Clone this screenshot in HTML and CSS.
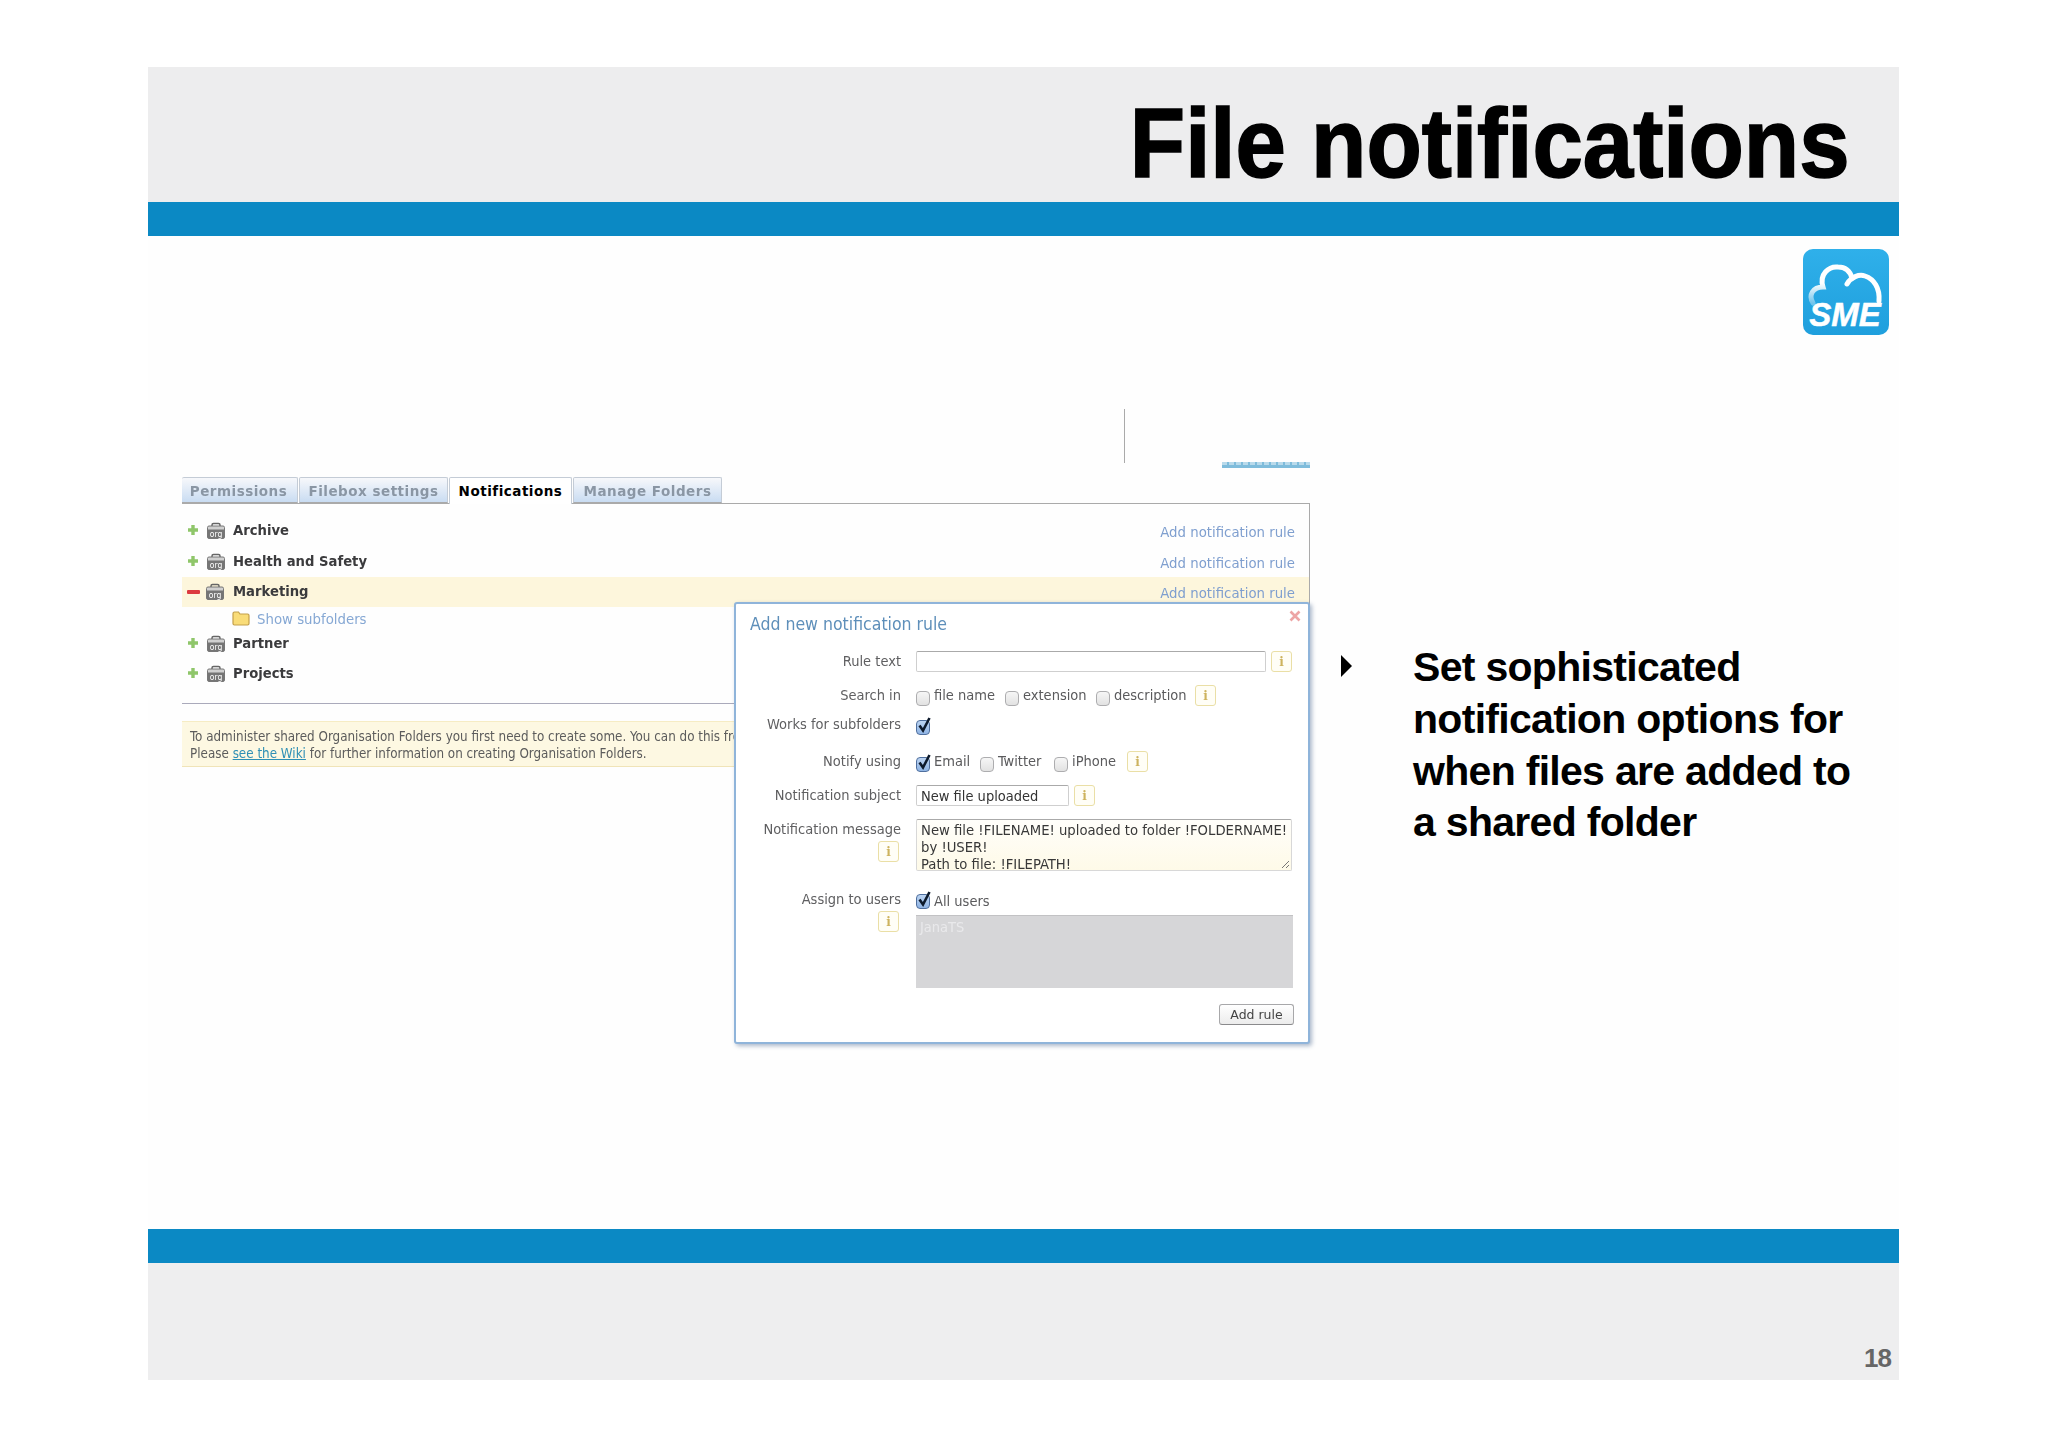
FILE: index.html
```html
<!DOCTYPE html>
<html lang="en">
<head>
<meta charset="utf-8">
<title>File notifications</title>
<link rel="stylesheet" href="styles.css">
</head>
<body>
<svg class="defs" width="0" height="0" aria-hidden="true">
  <symbol id="plus" viewBox="0 0 12 12">
    <path d="M4.300 1h3.400v3.300H11v3.400H7.700V11H4.300V7.700H1V4.300h3.300z" fill="#8fc66a"/>
  </symbol>
  <symbol id="tick" viewBox="0 0 16 18">
    <path d="M3.500 9.500l3.500 5L13.500 2" fill="none" stroke="#0d1a2c" stroke-width="2.600"/>
  </symbol>
</svg>

<div class="slide">
  <header class="head"><h1 class="title">File notifications</h1></header>
  <div class="bar"></div>

  <main class="main">
    <section class="app">
      <div class="topbits">
        <span class="vline"></span>
        <span class="strip"></span>
      </div>

      <nav class="tabs">
        <a class="tab tab-perm">Permissions</a>
        <a class="tab tab-file">Filebox settings</a>
        <a class="tab tab-on">Notifications</a>
        <a class="tab tab-man">Manage Folders</a>
      </nav>

      <div class="panel">
        <div class="row">
          <svg class="tog"><use href="#plus"/></svg>
          <svg class="org" viewBox="0 0 18 17"><path d="M5 5V3a1.500 1.500 0 0 1 1.500-1.500h5A1.500 1.500 0 0 1 13 3v2" fill="none" stroke="#666" stroke-width="1.500"/><rect x=".5" y="4" width="17" height="12.500" rx="1.500" fill="#d0d0d0" stroke="#777"/><rect x="1" y="7.500" width="16" height="8.500" fill="#757575"/><text x="9" y="14.500" text-anchor="middle" font-family="DejaVu Sans" font-size="8.500" fill="#fff">org</text></svg>
          <span class="name">Archive</span>
          <a class="addlink">Add notification rule</a>
        </div>
        <div class="row row-next">
          <svg class="tog"><use href="#plus"/></svg>
          <svg class="org" viewBox="0 0 18 17"><path d="M5 5V3a1.500 1.500 0 0 1 1.500-1.500h5A1.500 1.500 0 0 1 13 3v2" fill="none" stroke="#666" stroke-width="1.500"/><rect x=".5" y="4" width="17" height="12.500" rx="1.500" fill="#d0d0d0" stroke="#777"/><rect x="1" y="7.500" width="16" height="8.500" fill="#757575"/><text x="9" y="14.500" text-anchor="middle" font-family="DejaVu Sans" font-size="8.500" fill="#fff">org</text></svg>
          <span class="name">Health and Safety</span>
          <a class="addlink">Add notification rule</a>
        </div>
        <div class="row row-open">
          <span class="minus"></span>
          <svg class="org org-open" viewBox="0 0 18 17"><path d="M5 5V3a1.500 1.500 0 0 1 1.500-1.500h5A1.500 1.500 0 0 1 13 3v2" fill="none" stroke="#666" stroke-width="1.500"/><rect x=".5" y="4" width="17" height="12.500" rx="1.500" fill="#d0d0d0" stroke="#777"/><rect x="1" y="7.500" width="16" height="8.500" fill="#757575"/><text x="9" y="14.500" text-anchor="middle" font-family="DejaVu Sans" font-size="8.500" fill="#fff">org</text></svg>
          <span class="name">Marketing</span>
          <a class="addlink">Add notification rule</a>
        </div>
        <div class="subrow">
          <svg class="folder" viewBox="0 0 18 16"><path d="M1 3.500A1.500 1.500 0 0 1 2.500 2h4L8 4h7.500A1.500 1.500 0 0 1 17 5.500V13.500A1.500 1.500 0 0 1 15.500 15h-13A1.500 1.500 0 0 1 1 13.500z" fill="#f9dc78" stroke="#c39f4a" stroke-width="1.200"/></svg>
          <a class="sublink">Show subfolders</a>
        </div>
        <div class="row">
          <svg class="tog"><use href="#plus"/></svg>
          <svg class="org" viewBox="0 0 18 17"><path d="M5 5V3a1.500 1.500 0 0 1 1.500-1.500h5A1.500 1.500 0 0 1 13 3v2" fill="none" stroke="#666" stroke-width="1.500"/><rect x=".5" y="4" width="17" height="12.500" rx="1.500" fill="#d0d0d0" stroke="#777"/><rect x="1" y="7.500" width="16" height="8.500" fill="#757575"/><text x="9" y="14.500" text-anchor="middle" font-family="DejaVu Sans" font-size="8.500" fill="#fff">org</text></svg>
          <span class="name">Partner</span>
        </div>
        <div class="row">
          <svg class="tog"><use href="#plus"/></svg>
          <svg class="org" viewBox="0 0 18 17"><path d="M5 5V3a1.500 1.500 0 0 1 1.500-1.500h5A1.500 1.500 0 0 1 13 3v2" fill="none" stroke="#666" stroke-width="1.500"/><rect x=".5" y="4" width="17" height="12.500" rx="1.500" fill="#d0d0d0" stroke="#777"/><rect x="1" y="7.500" width="16" height="8.500" fill="#757575"/><text x="9" y="14.500" text-anchor="middle" font-family="DejaVu Sans" font-size="8.500" fill="#fff">org</text></svg>
          <span class="name">Projects</span>
        </div>
      </div>

      <div class="notice">
        <p class="notice-line">To administer shared Organisation Folders you first need to create some. You can do this from</p>
        <p class="notice-line">Please <a class="wiki">see the Wiki</a> for further information on creating Organisation Folders.</p>
      </div>

      <div class="modal">
        <div class="modal-head">
          <h2 class="modal-title">Add new notification rule</h2>
          <svg class="close" viewBox="0 0 12 12"><path d="M1.500 1.500l9 9M10.500 1.500l-9 9" stroke="#eda5a5" stroke-width="2.600" fill="none"/></svg>
        </div>

        <div class="frow frow-rule">
          <label class="flabel">Rule text</label>
          <div class="field"><span class="input input-wide"></span><span class="info">i</span></div>
        </div>

        <div class="frow frow-search">
          <label class="flabel">Search in</label>
          <div class="field">
            <span class="cb"></span><span class="opt opt-fn">file name</span>
            <span class="cb"></span><span class="opt opt-ext">extension</span>
            <span class="cb"></span><span class="opt opt-desc">description</span>
            <span class="info">i</span>
          </div>
        </div>

        <div class="frow frow-works">
          <label class="flabel">Works for subfolders</label>
          <div class="field"><span class="cb cb-on cb-works"><svg class="tick"><use href="#tick"/></svg></span></div>
        </div>

        <div class="frow frow-notify">
          <label class="flabel">Notify using</label>
          <div class="field">
            <span class="cb cb-on"><svg class="tick"><use href="#tick"/></svg></span><span class="opt opt-mail">Email</span>
            <span class="cb"></span><span class="opt opt-tw">Twitter</span>
            <span class="cb"></span><span class="opt opt-ip">iPhone</span>
            <span class="info">i</span>
          </div>
        </div>

        <div class="frow frow-subject">
          <label class="flabel">Notification subject</label>
          <div class="field"><span class="input input-subject">New file uploaded</span><span class="info">i</span></div>
        </div>

        <div class="frow frow-msg">
          <div class="flabel-col"><label class="flabel">Notification message</label><span class="info info-under">i</span></div>
          <div class="textarea">
            <div>New file !FILENAME! uploaded to folder !FOLDERNAME!</div>
            <div>by !USER!</div>
            <div>Path to file: !FILEPATH!</div>
            <svg class="grip" viewBox="0 0 9 9"><path d="M1 8l7-7M5 8l3-3" stroke="#777" fill="none"/></svg>
          </div>
        </div>

        <div class="frow frow-assign">
          <div class="flabel-col"><label class="flabel">Assign to users</label><span class="info info-under">i</span></div>
          <div class="assign-col">
            <div class="field field-all"><span class="cb cb-on"><svg class="tick"><use href="#tick"/></svg></span><span class="opt">All users</span></div>
            <div class="select">JanaTS</div>
          </div>
        </div>

        <div class="actions"><button class="btn" type="button">Add rule</button></div>
      </div>
    </section>

    <aside class="side">
      <svg class="logo" viewBox="0 0 86 86">
        <defs>
          <linearGradient id="lg" x1="0" y1="0" x2="0" y2="1"><stop offset="0" stop-color="#2fb0ea"/><stop offset="1" stop-color="#1f9fdd"/></linearGradient>
          <linearGradient id="fade" x1="0" y1="0" x2="0" y2="1"><stop offset=".45" stop-color="#fff"/><stop offset="1" stop-color="#fff" stop-opacity=".35"/></linearGradient>
        </defs>
        <rect width="86" height="86" rx="10" fill="url(#lg)"/>
        <path d="M10 54C5 46 10 38 20 38C16 25 26 17 35 18C42 18 47 22 49 29" fill="none" stroke="url(#fade)" stroke-width="5" stroke-linecap="round"/>
        <path d="M44 35C48 28 56 25 62 27C71 30 77 39 76 52" fill="none" stroke="#fff" stroke-width="5" stroke-linecap="round"/>
        <text class="logo-text" x="42" y="77" text-anchor="middle">SME</text>
      </svg>
      <div class="point">
        <svg class="arrow" viewBox="0 0 11 22"><path d="M0 0L11 11L0 22z" fill="#000"/></svg>
        <p class="point-text">Set sophisticated<br>notification options for<br>when files are added to<br>a shared folder</p>
      </div>
    </aside>
  </main>

  <div class="bar"></div>
  <footer class="foot"><span class="pageno">18</span></footer>
</div>
</body>
</html>
```

FILE: styles.css
```css
* { box-sizing: border-box; }
html, body { margin: 0; padding: 0; background: #fff; }
body { font-family: "Liberation Sans", Arial, sans-serif; }
p, h1, h2 { margin: 0; }
.defs { position: absolute; }

.slide { width: 1751px; margin: 67px 0 0 148px; display: flex; flex-direction: column; }

.head { height: 135px; background: #ededee; display: flex; justify-content: flex-end; padding: 8px 49px 0 0; }
.title { font-size: 99px; line-height: 135px; font-weight: 700; color: #000; -webkit-text-stroke: 1.600px #000; white-space: nowrap; transform: scaleX(.915); transform-origin: right center; }
.bar { height: 34px; background: #0b89c4; }
.main { height: 993px; background: #fefefe; display: flex; }
.foot { height: 117px; background: #eeeeef; display: flex; justify-content: flex-end; align-items: flex-end; padding: 0 8px 7px 0; }
.pageno { font-size: 26px; line-height: 30px; font-weight: 700; color: #666; letter-spacing: -1px; }

/* web application capture */
.app { position: relative; width: 1128px; margin: 173px 0 0 34px; align-self: flex-start; font-family: "DejaVu Sans Condensed", "DejaVu Sans", sans-serif; font-stretch: condensed; font-size: 14.5px; color: #555; filter: blur(.35px); }
.topbits { display: flex; height: 68px; }
.vline { width: 1px; height: 54px; margin-left: 942px; background: #aaa; }
.strip { width: 88px; height: 6px; margin: 53px 0 0 auto; background: repeating-linear-gradient(90deg, rgba(255, 255, 255, .45) 0 5px, rgba(255, 255, 255, 0) 5px 7px) 0 0 / 100% 3px no-repeat, #7fbcdb; }

.tabs { display: flex; gap: 1px; height: 26px; }
.tab { height: 26px; line-height: 26px; text-align: center; font-family: "DejaVu Sans", sans-serif; font-stretch: normal; font-weight: 700; font-size: 13.5px; letter-spacing: .5px; color: #8a96a4; background: linear-gradient(#f7f8fb, #c9dcf2); border: 1px solid #c4ccd6; border-bottom-color: #aaa; border-radius: 2px 2px 0 0; white-space: nowrap; }
.tab-perm { width: 116px; padding-right: 2px; border-left: 0; }
.tab-file { width: 149px; }
.tab-on { width: 123px; height: 27px; color: #000; background: #fff; border-bottom: 0; position: relative; z-index: 1; }
.tab-man { width: 149px; }

.panel { height: 201px; padding-top: 11px; border-top: 1px solid #aaa; border-right: 1px solid #aaa; border-bottom: 1px solid #aab; display: flex; flex-direction: column; }
.row { height: 30px; flex: none; display: flex; align-items: center; padding: 0 14px 0 5px; }
.row-next { margin-top: 1px; }
.row-open { height: 30px; margin-top: 1px; padding-bottom: 1px; background: #fdf6dc; }
.tog { width: 12px; height: 12px; flex: none; }
.minus { width: 13px; height: 4px; flex: none; background: #dc3a3f; border-radius: 1px; }
.org { width: 18px; height: 17px; margin-left: 8px; flex: none; }
.org-open { margin-left: 5px; width: 20px; }
.name { margin-left: 8px; font-family: "DejaVu Sans", sans-serif; font-stretch: normal; font-weight: 700; font-size: 13.2px; color: #3b3b3d; }
.addlink { margin: 4px 0 0 auto; color: #7f9fcf; font-family: "DejaVu Sans", sans-serif; font-stretch: normal; font-size: 13.3px; }
.subrow { height: 21px; flex: none; display: flex; align-items: flex-start; padding: 0 0 0 50px; }
.folder { width: 18px; height: 16px; flex: none; margin-top: 3px; }
.sublink { margin-left: 7px; line-height: 23px; font-size: 14.8px; color: #86a8d4; }

.notice { margin-top: 17px; height: 46px; padding: 6px 0 0 8px; background: #fdf8e2; border-top: 1px solid #f6ecc4; border-bottom: 1px solid #f0e4b8; font-size: 13.3px; line-height: 17px; color: #5c5c5c; white-space: nowrap; overflow: hidden; }
.wiki { color: #2e8fb5; text-decoration: underline; }

/* dialog */
.modal { position: absolute; left: 552px; top: 193px; width: 576px; height: 442px; background: #fff; border: 2px solid #8fb4da; border-radius: 3px; box-shadow: 2px 2px 4px rgba(70, 100, 140, .45); }
.modal-head { height: 47px; display: flex; justify-content: space-between; padding: 8px 7px 0 14px; }
.modal-title { font-size: 17.5px; line-height: 24px; font-weight: 400; color: #5e8fba; }
.close { width: 12px; height: 12px; margin-top: -2px; }

.frow { display: flex; gap: 15px; }
.frow-rule { height: 34px; }
.frow-search { height: 29px; }
.frow-works { height: 37px; }
.frow-notify, .frow-subject { height: 34px; }
.frow-msg { height: 70px; }
.frow-assign { height: 115px; }
.flabel { width: 165px; flex: none; line-height: 20px; text-align: right; color: #5f5f61; white-space: nowrap; }
.flabel-col { width: 165px; flex: none; display: flex; flex-direction: column; align-items: flex-end; }
.field { display: flex; align-items: flex-start; }

.input { display: block; height: 21px; padding-left: 4px; border: 1px solid #cfcfcf; border-top-color: #aaa; border-radius: 2px; background: #fff; line-height: 20px; color: #333; white-space: nowrap; }
.input-wide { width: 350px; }
.input-subject { width: 153px; }
.info { width: 21px; height: 21px; margin-left: 5px; flex: none; border: 1px solid #eadfa6; border-radius: 3px; background: #fffef6; text-align: center; font-family: "DejaVu Serif", serif; font-stretch: normal; font-weight: 700; font-size: 12px; line-height: 21px; color: #cdb35e; }
.info-under { margin: 2px 2px 0 0; }

.cb { width: 14px; height: 15px; margin: 6px 4px 0 0; flex: none; display: block; position: relative; border: 1px solid #adadaf; border-radius: 4px; background: linear-gradient(#f6f6f6, #e2e2e2); }
.cb-on { border-color: #4f6f9e; background: linear-gradient(#bcd4f2, #8fb4e4); }
.cb-works { margin-top: 6px; }
.tick { position: absolute; left: -1px; top: -5px; width: 16px; height: 18px; }
.opt { line-height: 20px; color: #5a5a5c; white-space: nowrap; }
.opt-fn { width: 71px; }
.opt-ext { width: 73px; }
.opt-desc { width: 76px; }
.opt-mail { width: 46px; }
.opt-tw { width: 56px; }
.opt-ip { width: 50px; }

.textarea { position: relative; width: 376px; height: 52px; padding: 1px 0 0 4px; border: 1px solid #d8d8d8; border-top-color: #aaa; border-radius: 2px; background: linear-gradient(#fffefa, #fefae8); font-size: 14.7px; line-height: 17px; color: #383838; white-space: nowrap; overflow: hidden; }
.grip { position: absolute; right: 1px; bottom: 1px; width: 9px; height: 9px; }
.assign-col { display: flex; flex-direction: column; }
.field-all { height: 26px; }
.field-all .opt { margin-top: 2px; }
.field-all .cb { margin-top: 5px; }
.select { width: 377px; height: 73px; padding: 2px 0 0 4px; background: #d6d6d8; border-top: 1px solid #c2c2c4; line-height: 18px; color: #e9e9eb; }
.actions { display: flex; justify-content: flex-end; padding-right: 14px; }
.btn { width: 75px; height: 21px; padding: 0; border: 1px solid #a8a8aa; border-bottom-color: #8a8a8c; border-radius: 3px; background: linear-gradient(#fff, #ececec); font-family: "DejaVu Sans", sans-serif; font-size: 12.5px; line-height: 18px; color: #444; }

/* right column */
.side { flex: 1; display: flex; flex-direction: column; padding-top: 13px; }
.logo { width: 86px; height: 86px; align-self: flex-end; margin-right: 10px; }
.logo-text { font-family: "Liberation Sans", sans-serif; font-weight: 700; font-style: italic; font-size: 33px; fill: #fff; stroke: #fff; stroke-width: .5px; }
.point { margin-top: 307px; padding-left: 31px; display: flex; }
.arrow { width: 11px; height: 22px; margin-top: 13px; flex: none; }
.point-text { margin-left: 61px; font-size: 41px; line-height: 51.8px; font-weight: 700; letter-spacing: -.7px; color: #000; white-space: nowrap; }
```
